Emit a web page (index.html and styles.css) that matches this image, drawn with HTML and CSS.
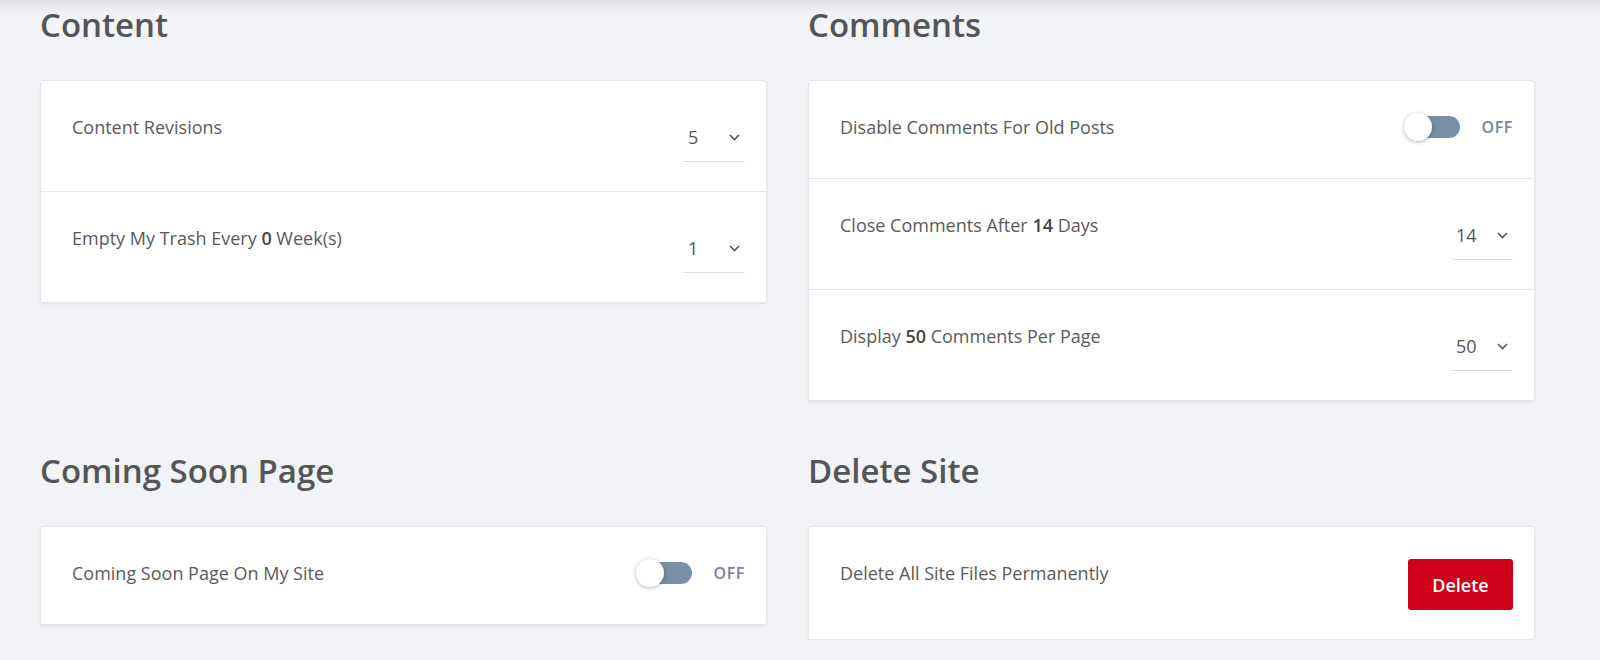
FILE: index.html
```html
<!DOCTYPE html>
<html lang="en">
  <head>
    <meta charset="UTF-8" />
    <meta name="viewport" content="width=device-width, initial-scale=1.0" />
    <title>Site Settings</title>
    <link rel="stylesheet" href="styles.css">
  </head>
  <body>
    <div class="settings">
      <!-- Content -->
      <section class="group">
        <h2>Content</h2>
        <div class="card">
          <div class="row">
            <span class="label">Content Revisions</span>
            <div class="select">
              <span class="value">5</span>
              <svg class="chevron" width="11" height="7" viewBox="0 0 11 7"><polyline points="1,1 5.5,5.5 10,1" /></svg>
            </div>
          </div>
          <div class="row">
            <span class="label">Empty My Trash Every <b>0</b> Week(s)</span>
            <div class="select">
              <span class="value">1</span>
              <svg class="chevron" width="11" height="7" viewBox="0 0 11 7"><polyline points="1,1 5.5,5.5 10,1" /></svg>
            </div>
          </div>
        </div>
      </section>

      <!-- Comments -->
      <section class="group">
        <h2>Comments</h2>
        <div class="card">
          <div class="row row-toggle">
            <span class="label">Disable Comments For Old Posts</span>
            <div class="toggle-wrap">
              <div class="toggle"><div class="knob"></div></div>
              <span class="toggle-text">OFF</span>
            </div>
          </div>
          <div class="row">
            <span class="label">Close Comments After <b>14</b> Days</span>
            <div class="select">
              <span class="value">14</span>
              <svg class="chevron" width="11" height="7" viewBox="0 0 11 7"><polyline points="1,1 5.5,5.5 10,1" /></svg>
            </div>
          </div>
          <div class="row">
            <span class="label">Display <b>50</b> Comments Per Page</span>
            <div class="select">
              <span class="value">50</span>
              <svg class="chevron" width="11" height="7" viewBox="0 0 11 7"><polyline points="1,1 5.5,5.5 10,1" /></svg>
            </div>
          </div>
        </div>
      </section>

      <!-- Coming Soon Page -->
      <section class="group">
        <h2>Coming Soon Page</h2>
        <div class="card">
          <div class="row row-toggle">
            <span class="label">Coming Soon Page On My Site</span>
            <div class="toggle-wrap">
              <div class="toggle"><div class="knob"></div></div>
              <span class="toggle-text">OFF</span>
            </div>
          </div>
        </div>
      </section>

      <!-- Delete Site -->
      <section class="group">
        <h2>Delete Site</h2>
        <div class="card">
          <div class="row">
            <span class="label">Delete All Site Files Permanently</span>
            <button class="btn-delete">Delete</button>
          </div>
        </div>
      </section>
    </div>
  </body>
</html>
```

FILE: styles.css
```css
body {
  font-family: "Open Sans", Arial, sans-serif;
  margin: 0;
  background: #f2f3f7 linear-gradient(#e1e2e6, #f2f3f7 14px) no-repeat;
  color: #5a5a5a;
}

.settings {
  display: grid;
  grid-template-columns: 727px 727px;
  column-gap: 41px;
  row-gap: 48px;
  align-items: start;
  padding: 3px 0 0 40px;
}

.group h2 {
  margin: 0 0 33px;
  font-size: 33px;
  line-height: 44px;
  font-weight: 600;
  color: #555;
}

.card {
  background: white;
  border: 1px solid #e3e5ea;
  border-radius: 3px;
  box-shadow: 0 1px 2px rgba(0, 0, 0, 0.08);
}

.row {
  display: flex;
  justify-content: space-between;
  align-items: flex-start;
  padding: 32px 21px 29px 31px;
  border-bottom: 1px solid #e3e5ea;
}

.row:last-child {
  border-bottom: none;
}

.label {
  font-size: 18px;
  line-height: 28px;
}

.label b {
  font-weight: 600;
  color: #444;
}

.select {
  display: flex;
  justify-content: space-between;
  align-items: center;
  width: 57px;
  height: 26px;
  margin-top: 9px;
  padding: 2px 0 11px 5px;
  border-bottom: 1px solid #dcdee2;
}

.value {
  font-size: 18px;
  line-height: 26px;
  color: #555;
}

.chevron {
  margin-right: 5px;
  fill: none;
  stroke: #555;
  stroke-width: 1.6;
}

.row-toggle {
  padding-bottom: 37px;
}

.toggle-wrap {
  display: flex;
  align-items: center;
  height: 28px;
  gap: 22px;
}

.toggle {
  position: relative;
  width: 54px;
  height: 22px;
  margin-left: 2px;
  border-radius: 11px;
  background: #7a8ea8;
}

.knob {
  position: absolute;
  top: -3px;
  left: -2px;
  width: 28px;
  height: 28px;
  border-radius: 50%;
  background: white;
  box-shadow: 0 1px 4px rgba(0, 0, 0, 0.3);
}

.toggle-text {
  font-size: 16px;
  font-weight: 600;
  letter-spacing: 0.6px;
  color: #7285a0;
}

.btn-delete {
  width: 105px;
  height: 51px;
  border: none;
  border-radius: 3px;
  background: #d0021b;
  color: white;
  font-family: inherit;
  font-size: 18px;
  font-weight: 600;
  cursor: pointer;
}
```
